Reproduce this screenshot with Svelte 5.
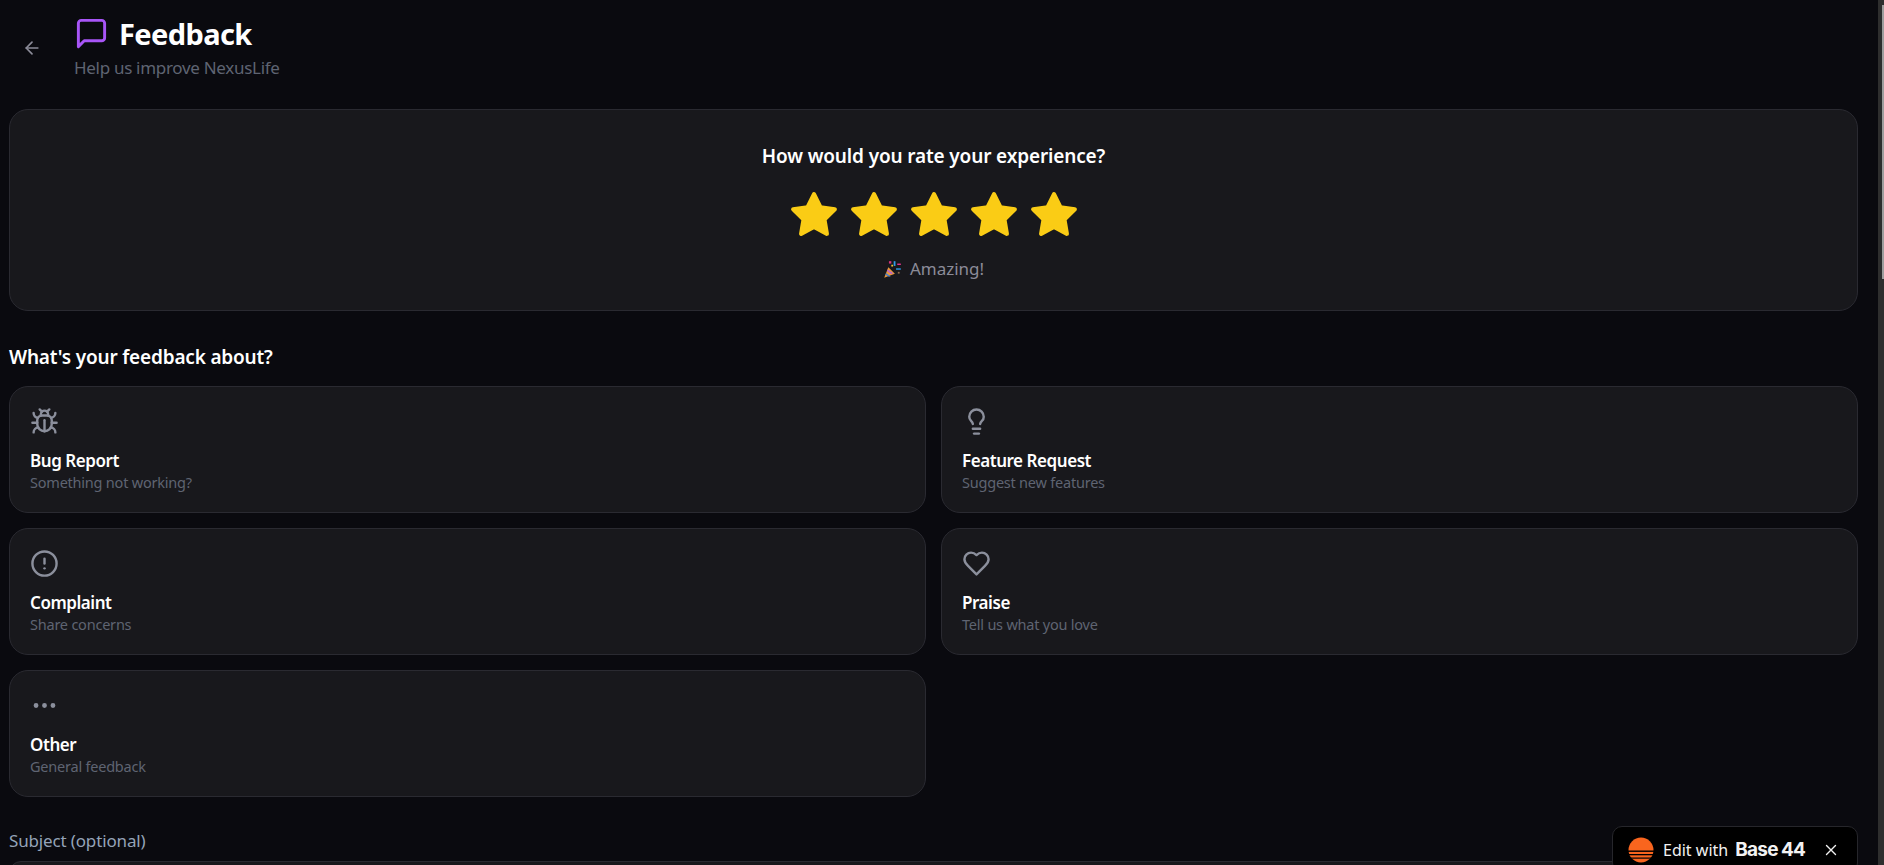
<script>
  let rating = $state(5);

  const stars = [1, 2, 3, 4, 5];

  const topics = [
    { id: 'bug', label: 'Bug Report', hint: 'Something not working?' },
    { id: 'feature', label: 'Feature Request', hint: 'Suggest new features' },
    { id: 'complaint', label: 'Complaint', hint: 'Share concerns' },
    { id: 'praise', label: 'Praise', hint: 'Tell us what you love' },
    { id: 'other', label: 'Other', hint: 'General feedback' }
  ];
</script>

<main>
  <header>
    <button class="back" aria-label="Back">
      <svg viewBox="0 0 24 24"><path d="m12 19-7-7 7-7" /><path d="M19 12H5" /></svg>
    </button>
    <div>
      <h1>
        <svg class="title-icon" viewBox="0 0 24 24"><path d="M21 15a2 2 0 0 1-2 2H7l-4 4V5a2 2 0 0 1 2-2h14a2 2 0 0 1 2 2z" /></svg>
        Feedback
      </h1>
      <p class="sub">Help us improve NexusLife</p>
    </div>
  </header>

  <section class="card rating">
    <h2>How would you rate your experience?</h2>
    <div class="stars">
      {#each stars as s}
        <button class="star" aria-label="{s} stars" onclick={() => (rating = s)}>
          <svg viewBox="0 0 24 24" class:on={s <= rating}>
            <polygon points="12 2 15.09 8.26 22 9.27 17 14.14 18.18 21.02 12 17.77 5.82 21.02 7 14.14 2 9.27 8.91 8.26 12 2" />
          </svg>
        </button>
      {/each}
    </div>
    <p class="verdict">
      <svg class="popper" viewBox="0 0 16 16" aria-hidden="true">
        <path d="M1 15 4.5 6 10 11.5z" fill="#e8963a" />
        <path d="M2.6 11 6.5 13.6 5 14.2 2 12.5z" fill="#4a7fc9" />
        <path d="M3.8 8 8.4 11 7.2 11.9 3.3 9.3z" fill="#b565c9" />
        <rect x="5" y="1" width="2" height="2" fill="#d6337f" />
        <rect x="9" y="1" width="1.5" height="4" fill="#2f9be8" />
        <rect x="12" y="3" width="3" height="1.2" fill="#e8338f" />
        <rect x="11" y="7" width="4" height="1.2" fill="#2f9be8" />
        <rect x="7" y="4" width="1.5" height="1.5" fill="#f2c230" />
        <rect x="12.5" y="10" width="1.5" height="1.5" fill="#8b6a4a" />
      </svg>
      Amazing!
    </p>
  </section>

  <h3>What's your feedback about?</h3>
  <div class="topics">
    {#each topics as t}
      <button class="card topic">
        <svg class="topic-icon" viewBox="0 0 24 24">
          {#if t.id === 'bug'}
            <path d="m8 2 1.88 1.88" /><path d="M14.12 3.88 16 2" /><path d="M9 7.13v-1a3.003 3.003 0 1 1 6 0v1" />
            <path d="M12 20c-3.3 0-6-2.7-6-6v-3a4 4 0 0 1 4-4h4a4 4 0 0 1 4 4v3c0 3.3-2.7 6-6 6" /><path d="M12 20v-9" />
            <path d="M6.53 9C4.6 8.8 3 7.1 3 5" /><path d="M6 13H2" /><path d="M3 21c0-2.1 1.7-3.9 3.8-4" />
            <path d="M20.97 5c0 2.1-1.6 3.8-3.5 4" /><path d="M22 13h-4" /><path d="M17.2 17c2.1.1 3.8 1.9 3.8 4" />
          {:else if t.id === 'feature'}
            <path d="M15 14c.2-1 .7-1.7 1.5-2.5 1-.9 1.5-2.2 1.5-3.5A6 6 0 0 0 6 8c0 1 .2 2.2 1.5 3.5.7.7 1.3 1.5 1.5 2.5" />
            <path d="M9 18h6" /><path d="M10 22h4" />
          {:else if t.id === 'complaint'}
            <circle cx="12" cy="12" r="10" /><path d="M12 8v4" /><path d="M12 16h.01" />
          {:else if t.id === 'praise'}
            <path d="M19 14c1.49-1.46 3-3.21 3-5.5A5.5 5.5 0 0 0 16.5 3c-1.76 0-3 .5-4.5 2-1.5-1.5-2.74-2-4.5-2A5.5 5.5 0 0 0 2 8.5c0 2.3 1.5 4.05 3 5.5l7 7Z" />
          {:else}
            <circle cx="12" cy="12" r="1" /><circle cx="19" cy="12" r="1" /><circle cx="5" cy="12" r="1" />
          {/if}
        </svg>
        <span class="topic-label">{t.label}</span>
        <span class="topic-hint">{t.hint}</span>
      </button>
    {/each}
  </div>

  <label class="field">
    <span>Subject (optional)</span>
    <input type="text" placeholder="Brief summary..." />
  </label>
</main>

<div class="scrollbar"><div class="thumb"></div></div>

<div class="badge">
  <svg class="logo" viewBox="0 0 26 26" aria-hidden="true">
    <circle cx="13" cy="13" r="12.5" fill="#f9651e" />
    <rect x="0" y="13.5" width="26" height="1.4" fill="#000" />
    <rect x="0" y="17" width="26" height="1.3" fill="#000" />
    <rect x="0" y="20.5" width="26" height="1.2" fill="#000" />
  </svg>
  <span class="edit">Edit with</span>
  <span class="brand">Base<i>44</i></span>
  <svg class="close" viewBox="0 0 12 12" aria-hidden="true"><path d="M1.5 1.5l9 9M10.5 1.5l-9 9" /></svg>
</div>

<style>
  :global(html) {
    background: #0a0a0f;
  }
  :global(body) {
    background: #0a0a0f;
    color: #fff;
    font-family: "Noto Sans", "Open Sans", sans-serif;
  }

  main {
    padding: 0 26px 40px 9px;
  }
  svg {
    display: block;
    fill: none;
    stroke: currentColor;
    stroke-width: 2;
    stroke-linecap: round;
    stroke-linejoin: round;
  }
  button {
    font-family: inherit;
    background: none;
    border: none;
    color: inherit;
    padding: 0;
  }

  header {
    display: flex;
    align-items: center;
    height: 109px;
    box-sizing: border-box;
    padding-bottom: 14px;
  }
  .back {
    color: #8b8b98;
    margin: 0 32px 0 13px;
  }
  .back svg {
    width: 20px;
    height: 20px;
  }
  h1 {
    display: flex;
    align-items: center;
    gap: 10px;
    margin: 0;
    font-size: 29px;
    line-height: 36px;
    font-weight: 700;
    letter-spacing: -0.6px;
  }
  .title-icon {
    color: #a855f7;
    width: 35px;
    height: 35px;
  }
  .sub {
    margin: 4px 0 0;
    font-size: 17px;
    line-height: 24px;
    letter-spacing: -0.3px;
    color: #5f6472;
  }

  .card {
    box-sizing: border-box;
    background: #18181c;
    border: 1px solid #2a2a31;
    border-radius: 19px;
  }
  .rating {
    height: 202px;
    padding-top: 34px;
    text-align: center;
  }
  h2 {
    margin: 0;
    font-size: 19px;
    line-height: 25px;
    font-weight: 600;
    letter-spacing: -0.14px;
  }
  .stars {
    display: flex;
    justify-content: center;
    gap: 10px;
    margin-top: 21px;
  }
  .star svg {
    width: 50px;
    height: 50px;
    color: #3f3f46;
  }
  .star svg.on {
    color: #facc15;
    fill: #facc15;
  }
  .verdict {
    display: flex;
    justify-content: center;
    align-items: center;
    gap: 8px;
    margin: 17px 0 0;
    font-size: 17px;
    line-height: 24px;
    color: #8b8b98;
  }
  .popper {
    width: 19px;
    height: 19px;
    stroke: none;
  }

  h3 {
    margin: 34px 0 0;
    font-size: 19px;
    line-height: 25px;
    font-weight: 600;
    letter-spacing: -0.18px;
  }
  .topics {
    display: grid;
    grid-template-columns: 1fr 1fr;
    gap: 15px;
    margin-top: 16px;
  }
  .topic {
    display: flex;
    flex-direction: column;
    height: 127px;
    padding: 20px;
    text-align: left;
  }
  .topic-icon {
    width: 29px;
    height: 29px;
    color: #8b8f9c;
  }
  .topic-label {
    margin-top: 13px;
    font-size: 17px;
    line-height: 23px;
    font-weight: 600;
    letter-spacing: -0.45px;
    color: #fff;
  }
  .topic-hint {
    font-size: 14.5px;
    line-height: 20px;
    letter-spacing: -0.22px;
    color: #5f6472;
  }

  .field {
    display: block;
    margin-top: 32px;
  }
  .field span {
    display: block;
    font-size: 17px;
    line-height: 24px;
    letter-spacing: -0.15px;
    color: #94a3b8;
  }
  .field input {
    display: block;
    box-sizing: border-box;
    width: 100%;
    margin-top: 8px;
    padding: 14px 16px;
    background: #18181c;
    border: 1px solid #2a2a31;
    border-radius: 12px;
    color: #fff;
    font: inherit;
  }

  .scrollbar {
    position: fixed;
    top: 0;
    right: 0;
    bottom: 0;
    width: 6px;
    background: #2e2e2e;
  }
  .thumb {
    width: 2px;
    height: 274px;
    margin: 5px 0 0 4px;
    background: #9e9e9e;
  }

  .badge {
    position: fixed;
    left: 1612px;
    top: 826px;
    box-sizing: border-box;
    width: 246px;
    height: 47px;
    display: flex;
    align-items: center;
    padding: 0 15px;
    background: #000;
    border: 1px solid #26262b;
    border-radius: 10px;
  }
  .logo {
    width: 26px;
    height: 26px;
    stroke: none;
    flex: none;
  }
  .edit {
    margin-left: 9px;
    font-size: 16px;
    color: #f2f2f2;
  }
  .brand {
    margin-left: 7px;
    font-family: Inter, sans-serif;
    font-size: 19px;
    font-weight: 700;
    letter-spacing: -0.7px;
    color: #f2f2f2;
  }
  .brand i {
    font-style: normal;
    margin-left: 3px;
  }
  .close {
    width: 12px;
    height: 12px;
    margin-left: auto;
    margin-right: 5px;
    color: #f2f2f2;
    stroke-width: 1.4;
  }
</style>
